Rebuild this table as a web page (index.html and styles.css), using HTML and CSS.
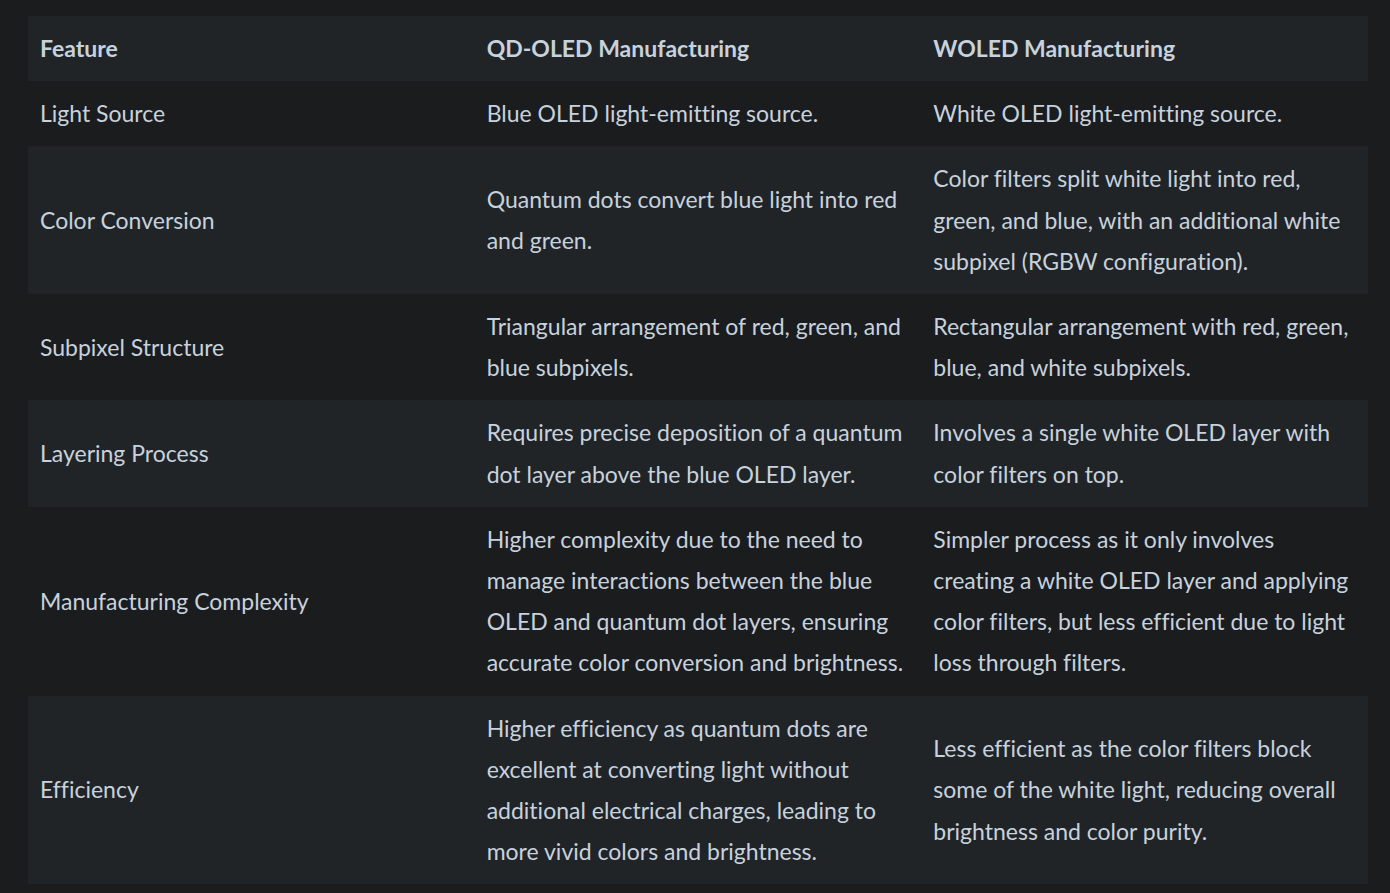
FILE: index.html
```html
<!DOCTYPE html>
<html>
<head>
<meta charset="utf-8">
<link rel="stylesheet" href="styles.css">
</head>
<body>
<table class="cmp">
  <thead>
    <tr><th>Feature</th><th>QD-OLED Manufacturing</th><th>WOLED Manufacturing</th></tr>
  </thead>
  <tbody>
    <tr><td>Light Source</td><td>Blue OLED light-emitting source.</td><td>White OLED light-emitting source.</td></tr>
    <tr><td>Color Conversion</td><td>Quantum dots convert blue light into red and green.</td><td>Color filters split white light into red, green, and blue, with an additional white subpixel (RGBW configuration).</td></tr>
    <tr><td>Subpixel Structure</td><td>Triangular arrangement of red, green, and blue subpixels.</td><td>Rectangular arrangement with red, green, blue, and white subpixels.</td></tr>
    <tr><td>Layering Process</td><td>Requires precise deposition of a quantum dot layer above the blue OLED layer.</td><td>Involves a single white OLED layer with color filters on top.</td></tr>
    <tr><td>Manufacturing Complexity</td><td>Higher complexity due to the need to manage interactions between the blue OLED and quantum dot layers, ensuring accurate color conversion and brightness.</td><td>Simpler process as it only involves creating a white OLED layer and applying color filters, but less efficient due to light loss through filters.</td></tr>
    <tr><td>Efficiency</td><td>Higher efficiency as quantum dots are excellent at converting light without additional electrical charges, leading to more vivid colors and brightness.</td><td>Less efficient as the color filters block some of the white light, reducing overall brightness and color purity.</td></tr>
  </tbody>
</table>
</body>
</html>
```
FILE: styles.css
```css
html, body {
  margin: 0;
  background: #1b1c1e;
}
body {
  padding: 16px 22px 8px 28px;
  font-family: Lato, "Open Sans", sans-serif;
  color: #c6d2de;
}
.cmp {
  width: 1340px;
  border-collapse: collapse;
  table-layout: fixed;
  font-size: 23px;
  line-height: 41.2px;
  font-variant-ligatures: none;
}
.cmp th, .cmp td {
  padding: 12px 12px;
  text-align: left;
  vertical-align: middle;
}
.cmp th {
  font-weight: 700;
}
.cmp thead tr {
  background: #212427;
}
.cmp tbody tr:nth-child(even) {
  background: #212427;
}
.cmp tbody tr:nth-child(odd) {
  background: #1b1c1e;
}
```
